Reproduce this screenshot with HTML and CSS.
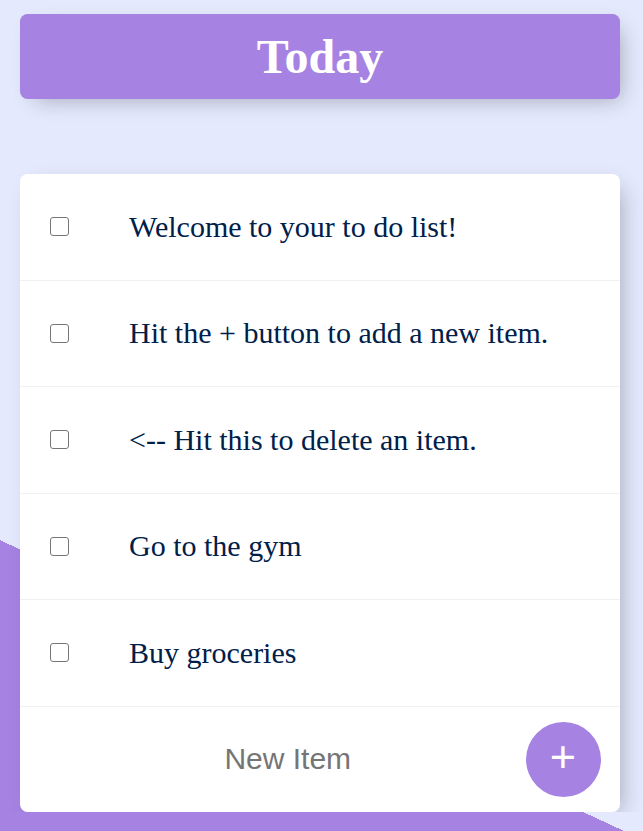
FILE: index.html
```html
<!DOCTYPE html>
<html lang="en">
<head>
<meta charset="utf-8">
<title>To Do List</title>
<link rel="stylesheet" href="styles.css">
</head>
<body>
  <div class="page">
    <div class="box heading">
      <h1 class="title">Today</h1>
    </div>
    <div class="box list">
      <div class="item">
        <input class="check" type="checkbox">
        <p class="text">Welcome to your to do list!</p>
      </div>
      <div class="item">
        <input class="check" type="checkbox">
        <p class="text">Hit the + button to add a new item.</p>
      </div>
      <div class="item">
        <input class="check" type="checkbox">
        <p class="text">&lt;-- Hit this to delete an item.</p>
      </div>
      <div class="item">
        <input class="check" type="checkbox">
        <p class="text">Go to the gym</p>
      </div>
      <div class="item">
        <input class="check" type="checkbox">
        <p class="text">Buy groceries</p>
      </div>
      <form class="item new-item">
        <input class="new-input" type="text" name="newItem" placeholder="New Item" autocomplete="off">
        <button class="add-btn" type="button">+</button>
      </form>
    </div>
  </div>
</body>
</html>
```

FILE: styles.css
```css
html {
  height: 831px;
  overflow: hidden;
  background-color: #E4E9FD;
  background-image: linear-gradient(25deg, #A683E3 50%, #E4E9FD 50%);
  background-size: 643px 1380px;
  background-repeat: no-repeat;
  background-position: 0 0;
}

body {
  margin: 0;
  font-family: "Liberation Serif", "Times New Roman", serif;
}

.page {
  padding: 14px 0 0 20px;
  width: 600px;
}

.box {
  width: 600px;
  border-radius: 7.5px;
  box-shadow: 7.5px 7.5px 22.5px -7.5px rgba(0, 0, 0, 0.3);
}

.heading {
  background-color: #A683E3;
  text-align: center;
}

.title {
  margin: 0;
  padding: 15px;
  color: #fff;
  font-size: 48px;
  font-weight: bold;
  line-height: 55px;
}

.list {
  margin-top: 75px;
  background: #fff;
}

.item {
  min-height: 105.5px;
  display: flex;
  align-items: center;
  border-bottom: 1px solid #F1F1F1;
}

.item:last-child {
  border-bottom: 0;
  min-height: 105.5px;
}

.check {
  appearance: none;
  -webkit-appearance: none;
  box-sizing: border-box;
  width: 19px;
  height: 19px;
  margin: 30px;
  border: 1.5px solid #767676;
  border-radius: 3px;
  background: #fff;
  flex: none;
}

.text {
  margin: 0;
  padding: 30px;
  font-size: 30px;
  font-weight: 200;
  color: #00204a;
}

.new-item {
  margin: 0 0 0 30px;
  text-align: center;
}

.new-input {
  text-align: center;
  height: 90px;
  width: 469.5px;
  padding: 1.5px 3px;
  border: none;
  outline: none;
  font-family: "Liberation Sans", Arial, sans-serif;
  font-size: 30px;
  font-weight: 200;
  color: #000;
  background: transparent;
}

.new-input::placeholder {
  color: #757575;
}

.add-btn {
  box-sizing: border-box;
  min-height: 75px;
  width: 75px;
  border-radius: 50%;
  border: 0;
  background-color: #A683E3;
  color: #fff;
  font-family: "Liberation Sans", Arial, sans-serif;
  font-size: 45px;
  font-weight: normal;
  line-height: 1;
  padding: 0 0 6px 0;
  flex: none;
}
```
